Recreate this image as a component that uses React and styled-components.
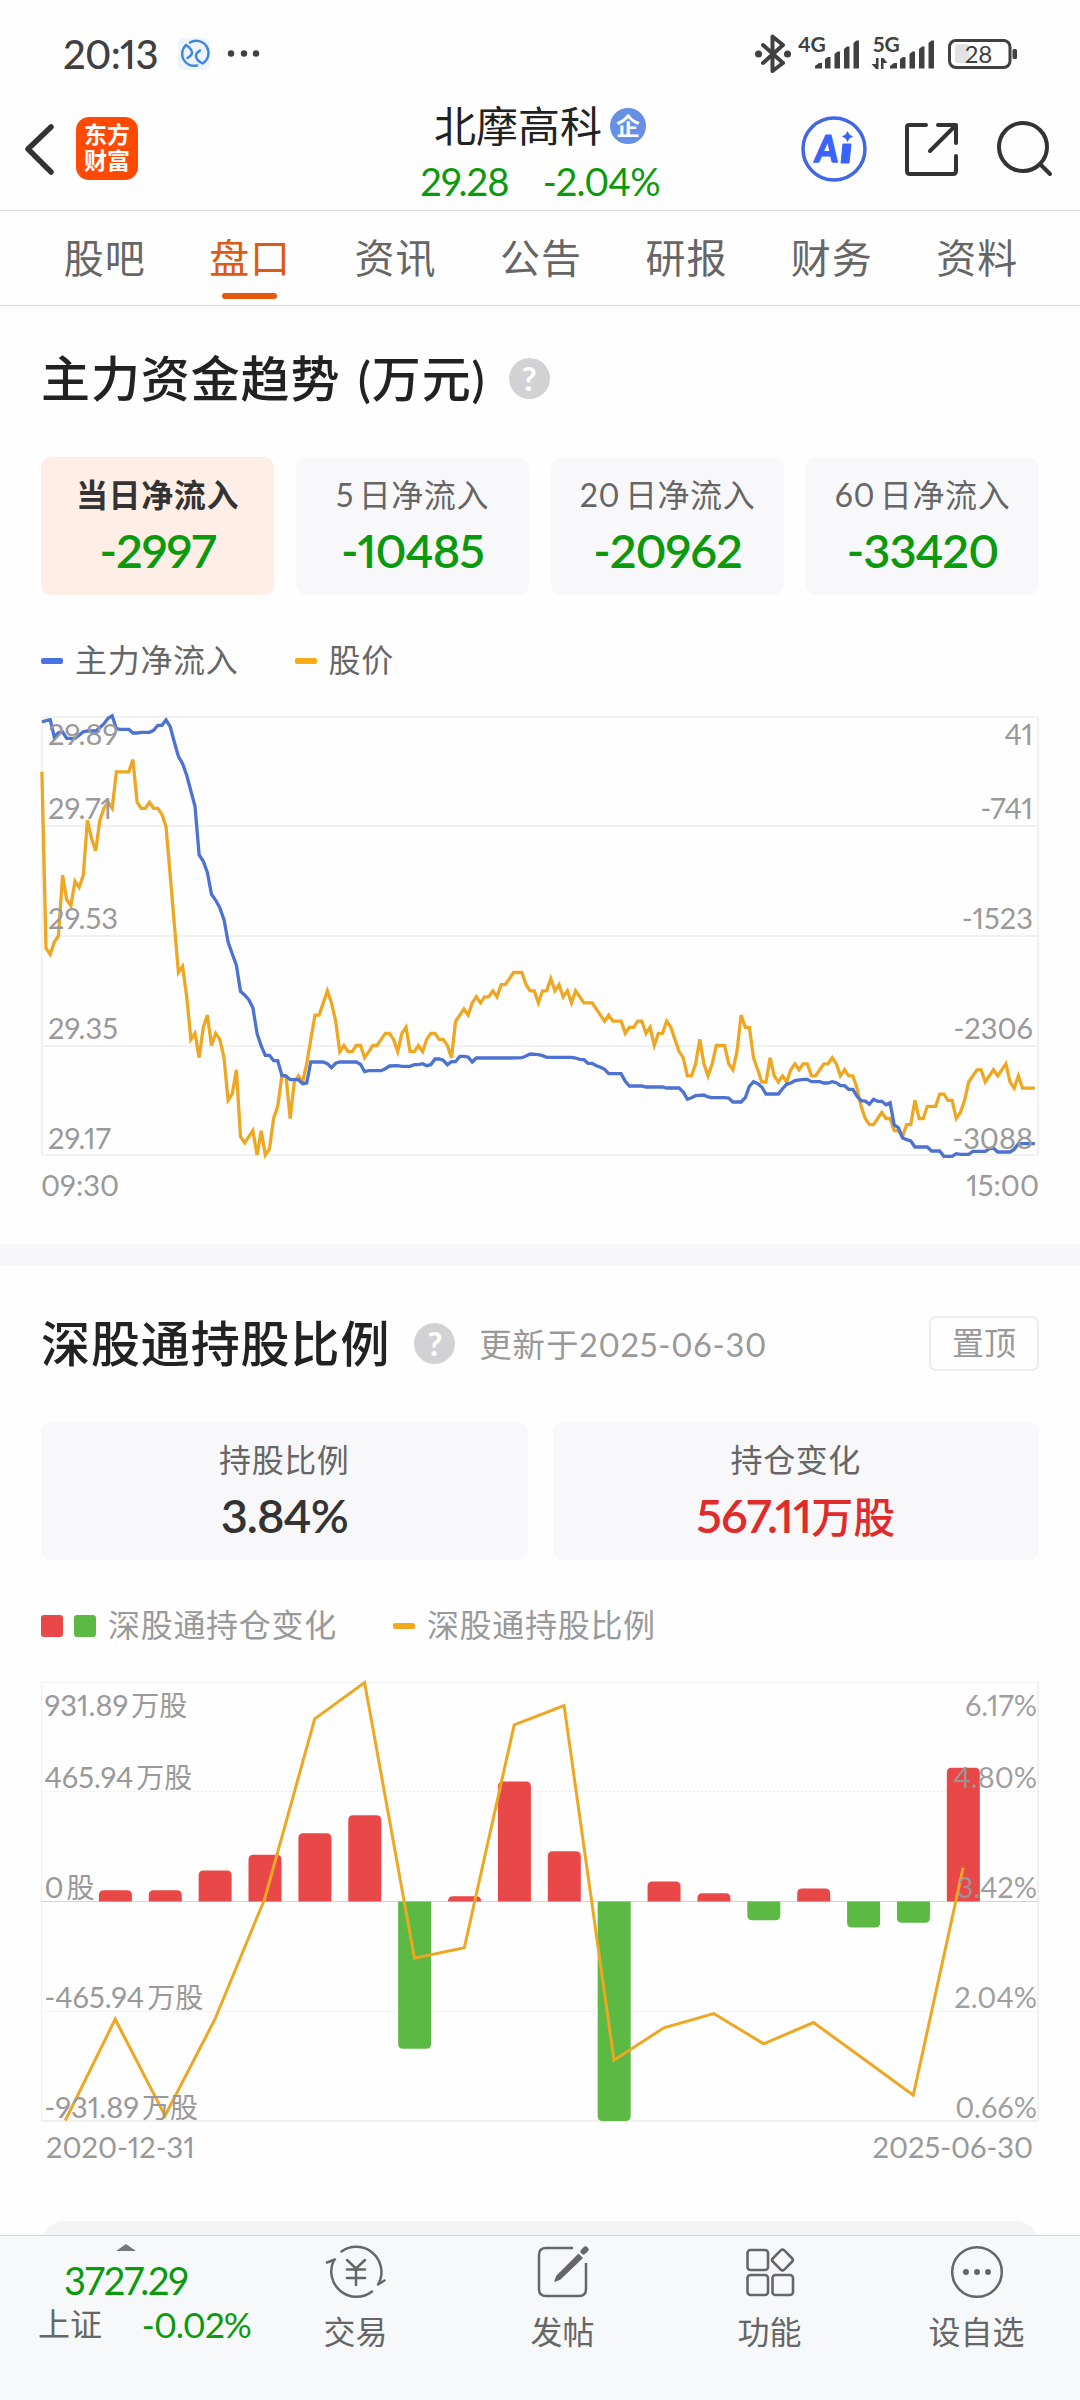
import React from "react"
import styled, { createGlobalStyle } from "styled-components"

const GREEN = "#0b990d"
const GREY = "#999999"
const ORANGE = "#eea722"

const GlobalStyle = createGlobalStyle`
  * {
    box-sizing: border-box;
  }

  body {
    margin: 0;
    background: #fefefe;
    font-family: Lato, "Noto Sans CJK SC", sans-serif;
    font-variant-numeric: proportional-nums;
    color: #222;
  }

  svg {
    display: block;
    overflow: visible;
    flex: none;
  }
`

const Screen = styled.div`
  width: 1080px;
  height: 2400px;
  overflow: hidden;
  display: flex;
  flex-direction: column;
`

const StatusBar = styled.div`
  height: 105px;
  padding: 2px 62px 0 63px;
  display: flex;
  align-items: center;
  color: #404040;
`

const Clock = styled.div`
  width: 115px;
  font-size: 40px;
  font-weight: 500;
  letter-spacing: -0.7px;
  line-height: 50px;
  white-space: nowrap;
`

const StatusRight = styled.div`
  margin-left: auto;
  display: flex;
  align-items: center;
`

const Header = styled.header`
  height: 106px;
  padding: 0 28px 0 24px;
  display: grid;
  grid-template-columns: 1fr auto 1fr;
  border-bottom: 1px solid #d6d6d6;
`

const HeaderLeft = styled.div`
  display: flex;
  align-items: center;
  gap: 22px;
  padding-bottom: 18px;
`

const HeaderRight = styled(HeaderLeft)`
  justify-content: flex-end;
  gap: 38px;
`

const AppLogo = styled.div`
  width: 62px;
  height: 63px;
  border-radius: 13px;
  background: #ff4a05;
  color: #fff;
  font-size: 23px;
  font-weight: 700;
  line-height: 26px;
  padding-top: 4px;
  text-align: center;
`

const StockTitle = styled.div`
  display: flex;
  flex-direction: column;
  align-items: center;
  padding-left: 4px;
`

const StockName = styled.div`
  height: 42px;
  display: flex;
  align-items: center;
  gap: 8px;
  font-size: 42px;
  line-height: 42px;
`

const CompanyBadge = styled.span`
  width: 36px;
  height: 36px;
  border-radius: 50%;
  background: #6590e6;
  color: #fff;
  font-size: 24px;
  font-weight: 700;
  line-height: 35px;
  text-align: center;
`

const StockPrice = styled.div`
  margin-top: 12px;
  display: flex;
  gap: 34px;
  font-size: 38px;
  letter-spacing: -0.9px;
  line-height: 44px;
  color: ${GREEN};
`

const Tabs = styled.nav`
  height: 95px;
  padding: 0 30px 0 32px;
  display: flex;
  border-bottom: 1px solid #d6d6d6;
`

const Tab = styled.div`
  flex: 1;
  position: relative;
  text-align: center;
  font-size: 40px;
  letter-spacing: 1px;
  line-height: 94px;
  color: ${p => (p.$active ? "#dd5a14" : "#666")};

  &::after {
    content: "";
    display: ${p => (p.$active ? "block" : "none")};
    position: absolute;
    left: 45px;
    bottom: 6px;
    width: 55px;
    height: 6px;
    border-radius: 3px;
    background: #e4580c;
  }
`

const Section = styled.section`
  padding: 0 41px;
`

const SectionHead = styled.div`
  display: flex;
  align-items: center;
  height: 56px;
  margin-top: ${p => p.$top}px;
`

const SectionTitle = styled.h2`
  margin: 0;
  font-size: 49px;
  font-weight: 500;
  letter-spacing: 0.9px;
  word-spacing: 4px;
  line-height: 56px;
  white-space: nowrap;
`

const Help = styled.span`
  width: 41px;
  height: 41px;
  margin-left: ${p => p.$left}px;
  border-radius: 50%;
  background: #d2d2d4;
  color: #fff;
  font-size: 33px;
  font-weight: 700;
  line-height: 40px;
  text-align: center;
`

const Updated = styled.span`
  margin-left: 24px;
  padding-bottom: 2px;
  font-size: 32.5px;
  letter-spacing: 0.8px;
  color: ${GREY};
`

const PinButton = styled.button`
  margin-left: auto;
  width: 110px;
  height: 55px;
  padding: 0;
  border: 2px solid #ececee;
  border-radius: 7px;
  background: none;
  font: inherit;
  font-size: 32px;
  line-height: 50px;
  color: ${GREY};
`

const Cards = styled.div`
  display: flex;
  gap: ${p => p.$gap}px;
  margin-top: 51px;
`

const Card = styled.div`
  flex: 1;
  height: 138px;
  padding-top: 16px;
  border-radius: 10px;
  text-align: center;
  white-space: nowrap;
  background: ${p => (p.$active ? "#feeee5" : "#f8f8fa")};
`

const CardLabel = styled.div`
  font-size: 32px;
  letter-spacing: 0.6px;
  word-spacing: -4px;
  line-height: 44px;
  font-weight: ${p => (p.$active ? 700 : 400)};
  color: ${p => (p.$active ? "#333" : "#666")};
`

const CardValue = styled.div`
  margin-top: 8px;
  font-size: 47px;
  font-weight: 600;
  line-height: 50px;
  letter-spacing: -1px;
  color: ${p => p.$color};

  small {
    font-size: 42px;
    font-weight: 500;
    letter-spacing: 0;
  }
`

const Legend = styled.div`
  display: flex;
  align-items: center;
  height: 40px;
  margin-top: 46px;
  font-size: 32px;
  letter-spacing: 0.7px;
  line-height: 36px;
  color: ${p => p.$color};
`

const LegendItem = styled.div`
  display: flex;
  align-items: center;
  margin-right: 56px;
`

const LegendText = styled.span`
  padding-bottom: 3px;
`

const Dash = styled.i`
  width: 22px;
  height: 6px;
  margin-right: 12px;
  border-radius: 2px;
  background: ${p => p.$color};
`

const Square = styled.i`
  width: 22px;
  height: 22px;
  margin-right: ${p => p.$gap}px;
  border-radius: 3px;
  background: ${p => p.$color};
`

const ChartBox = styled.div`
  height: ${p => p.$height}px;
  margin-top: ${p => p.$top}px;

  text {
    font-size: 29px;
    fill: ${GREY};
  }

  .cjk {
    font-size: 28px;
  }
`

const Divider = styled.div`
  height: 22px;
  flex: none;
  background: #f7f7fa;
`

const NextPanel = styled.div`
  flex: none;
  height: 14px;
  margin: auto 41px 0;
  overflow: hidden;

  &::before {
    content: "";
    display: block;
    height: 60px;
    border-radius: 24px;
    background: #f4f4f4;
  }
`

const BottomBar = styled.footer`
  flex: none;
  height: 165px;
  display: flex;
  border-top: 1px solid #d3d6d8;
  background: #f6f8fa;
`

const IndexQuote = styled.div`
  width: 252px;
  padding-top: 8px;
  display: flex;
  flex-direction: column;
  align-items: center;
`

const IndexValue = styled.div`
  margin-top: 8px;
  font-size: 38px;
  letter-spacing: -1.2px;
  line-height: 42px;
  color: ${GREEN};
`

const IndexRow = styled.div`
  width: 100%;
  padding: 0 1px 0 38px;
  display: flex;
  justify-content: space-between;
  font-size: 32px;
  line-height: 46px;
  color: #666;

  span {
    font-size: 35px;
    letter-spacing: -0.9px;
    color: ${GREEN};
  }
`

const Action = styled.div`
  flex: 1;
  padding-top: 6px;
  display: flex;
  flex-direction: column;
  align-items: center;
  font-size: 32px;
  line-height: 46px;
  color: #666;

  svg {
    margin-bottom: 7px;
  }
`

// price: [minute, cents below 29.89]; runs of equal values keep both ends
const PRICE = [
  [0, 9], [1, 38], [2, 39], [3, 37], [4, 36], [5, 26], [6, 30], [7, 31], [8, 27], [9, 28],
  [10, 26], [11, 17], [12, 20], [13, 22], [14, 17], [15, 15], [16, 14], [17, 15], [18, 9], [21, 9],
  [22, 7], [23, 14], [24, 15], [25, 15], [26, 14], [27, 15], [28, 15], [29, 16], [30, 18], [31, 26],
  [32, 34], [33, 42], [34, 41], [35, 46], [36, 53], [37, 52], [38, 56], [39, 51], [40, 49], [41, 54],
  [42, 52], [43, 53], [44, 56], [45, 63], [46, 62], [47, 58], [48, 69], [49, 70], [50, 69], [51, 68],
  [52, 72], [53, 68], [54, 72], [55, 71], [56, 66], [57, 64], [58, 59], [59, 59], [60, 66], [61, 60],
  [62, 59], [63, 60], [64, 57], [65, 53], [66, 49], [67, 49], [68, 47], [69, 45], [70, 47], [71, 50],
  [72, 55], [73, 54], [74, 55], [75, 55], [76, 54], [77, 54], [78, 56], [79, 55], [80, 54], [81, 54],
  [82, 53], [83, 52], [84, 52], [85, 53], [86, 55], [87, 52], [88, 51], [89, 55], [90, 55], [91, 54],
  [92, 55], [93, 53], [94, 52], [95, 52], [96, 53], [97, 53], [98, 54], [99, 56], [100, 50], [101, 49],
  [102, 48], [103, 49], [104, 47], [105, 46], [106, 47], [107, 46], [108, 46], [109, 45], [110, 46],
  [111, 44], [112, 44], [113, 43], [114, 42], [116, 42], [117, 44], [118, 45], [119, 45], [120, 47],
  [121, 45], [122, 45], [123, 43], [124, 45], [125, 44], [126, 46], [127, 45], [128, 47], [129, 45],
  [130, 46], [131, 47], [133, 47], [134, 48], [135, 49], [136, 50], [137, 49], [138, 50], [140, 50],
  [141, 52], [142, 51], [143, 51], [144, 50], [145, 50], [146, 52], [147, 51], [148, 54], [149, 52],
  [150, 52], [151, 50], [152, 51], [153, 53], [154, 55], [155, 56], [156, 59], [157, 59], [158, 57],
  [159, 53], [160, 57], [161, 59], [162, 57], [163, 54], [165, 54], [166, 57], [167, 58], [168, 55],
  [169, 49], [170, 51], [171, 51], [172, 56], [173, 58], [174, 60], [175, 60], [176, 56], [177, 59],
  [178, 60], [179, 59], [180, 60], [181, 58], [182, 57], [183, 58], [184, 57], [185, 57], [186, 59],
  [187, 59], [188, 58], [189, 57], [190, 57], [191, 56], [192, 57], [193, 59], [194, 58], [195, 59],
  [196, 59], [197, 61], [198, 64], [199, 66], [200, 67], [201, 67], [202, 66], [203, 65], [204, 66],
  [205, 66], [206, 68], [207, 68], [208, 69], [209, 67], [210, 67], [211, 63], [212, 66], [213, 66],
  [214, 64], [216, 64], [217, 62], [218, 62], [219, 63], [220, 63], [221, 66], [222, 65], [223, 63],
  [224, 60], [225, 59], [226, 58], [227, 58], [228, 60], [229, 59], [230, 58], [231, 59], [232, 58],
  [233, 57], [234, 60], [235, 61], [236, 59], [237, 61], [240, 61],
]

// net inflow: [minute, drop from the top of the scale], full scale is 1314
const FLOW = [
  [0, 15], [1, 11], [2, 8], [3, 60], [4, 47], [5, 45], [6, 64], [8, 64], [9, 55], [10, 44],
  [11, 42], [13, 42], [14, 32], [15, 20], [16, 4], [17, -4], [18, 35], [19, 37], [21, 37], [22, 48],
  [23, 48], [24, 46], [26, 46], [27, 40], [28, 25], [29, 25], [30, 9], [31, 29], [32, 75], [33, 118],
  [34, 140], [35, 175], [36, 222], [37, 268], [38, 413], [39, 433], [40, 467], [41, 532], [42, 550],
  [43, 572], [44, 608], [45, 675], [46, 710], [47, 745], [48, 823], [49, 834], [50, 848], [51, 872],
  [52, 950], [53, 987], [54, 1015], [55, 1015], [56, 1031], [57, 1031], [58, 1075], [59, 1077],
  [60, 1088], [62, 1088], [63, 1100], [64, 1098], [65, 1035], [68, 1035], [69, 1040], [70, 1052],
  [71, 1039], [72, 1035], [76, 1035], [77, 1042], [78, 1064], [79, 1061], [82, 1061], [83, 1055],
  [84, 1047], [86, 1046], [87, 1048], [89, 1048], [90, 1043], [91, 1043], [92, 1040], [93, 1046],
  [94, 1043], [95, 1026], [96, 1026], [97, 1030], [98, 1043], [99, 1034], [100, 1034], [101, 1018],
  [102, 1018], [103, 1020], [104, 1035], [105, 1023], [113, 1023], [116, 1022], [117, 1017],
  [118, 1011], [120, 1013], [121, 1016], [122, 1021], [128, 1021], [129, 1023], [130, 1027],
  [131, 1028], [132, 1039], [133, 1039], [134, 1046], [135, 1051], [136, 1057], [137, 1070],
  [140, 1070], [141, 1093], [142, 1107], [145, 1107], [146, 1110], [150, 1110], [151, 1113],
  [154, 1113], [155, 1125], [156, 1147], [157, 1142], [158, 1136], [160, 1134], [161, 1140],
  [162, 1142], [165, 1142], [166, 1143], [167, 1155], [169, 1155], [170, 1142], [171, 1108],
  [172, 1094], [173, 1100], [174, 1110], [175, 1131], [178, 1131], [179, 1115], [180, 1102],
  [181, 1098], [182, 1091], [184, 1087], [185, 1087], [186, 1094], [188, 1094], [189, 1098],
  [190, 1098], [191, 1094], [192, 1097], [193, 1106], [194, 1106], [195, 1117], [196, 1117],
  [197, 1138], [198, 1151], [199, 1152], [200, 1162], [201, 1147], [202, 1153], [203, 1153],
  [204, 1163], [205, 1157], [206, 1224], [207, 1232], [208, 1262], [209, 1268], [210, 1272],
  [211, 1290], [214, 1290], [215, 1302], [217, 1302], [218, 1318], [220, 1318], [221, 1310],
  [222, 1312], [224, 1312], [225, 1303], [228, 1303], [229, 1295], [230, 1293], [231, 1305],
  [234, 1305], [235, 1297], [236, 1280], [240, 1280],
]

const HOLDING_CHANGE = [
  0, 11.3, 11.3, 31, 46.7, 68.3, 86.3, -147.3, 5.3, 120, 50.3, -219.5, 20, 8.3, -18.7, 13, -26,
  -21.3, 133.7,
]

const HOLDING_RATIO = [
  438, 336.7, 433.3, 336.7, 216, 36.3, 0, 275.7, 265.3, 42.3, 23, 377.7, 345.3, 331, 361.3, 340,
  376.3, 412.7, 185.3,
]

// text baselines of the five scale labels
const ROWS = [29, 102.5, 212.5, 322.5, 432.5]

function toPoints(series, scale) {
  return series.map(([m, v]) => `${(0.9 + m * 4.1375).toFixed(1)},${(1 + v * scale).toFixed(1)}`).join(" ")
}

function TrendChart() {
  const prices = ["29.89", "29.71", "29.53", "29.35", "29.17"]
  const flows = ["41", "-741", "-1523", "-2306", "-3088"]
  return (
    <ChartBox $top={35} $height={528}>
      <svg width="998" height="490">
        <g stroke="#f1f1f2" strokeWidth="2" fill="none">
          <rect x="1" y="1" width="996" height="438" />
          <path d="M1 110H997M1 220H997M1 330H997" />
        </g>
        <polyline points={toPoints(PRICE, 438 / 72)} fill="none" stroke={ORANGE} strokeWidth="3.3" />
        <polyline points={toPoints(FLOW, 1 / 3)} fill="none" stroke="#4c72d2" strokeWidth="3.3" />
        {prices.map((t, i) => (
          <text key={t} x="7" y={ROWS[i]}>
            {t}
          </text>
        ))}
        {flows.map((t, i) => (
          <text key={t} x="992" y={ROWS[i]} textAnchor="end">
            {t}
          </text>
        ))}
        <text x="0" y="480">
          09:30
        </text>
        <text x="998" y="480" textAnchor="end">
          15:00
        </text>
      </svg>
    </ChartBox>
  )
}

function Bar({ slot, value }) {
  const x = 8 + slot * 49.88
  const h = Math.abs(value)
  const r = Math.min(5, h)
  const dir = value > 0 ? -1 : 1
  const end = 219.5 + dir * h
  return (
    <path
      d={`M${x} 219.5V${end - dir * r}Q${x} ${end} ${x + r} ${end}H${x + 33 - r}Q${x + 33} ${end} ${x + 33} ${
        end - dir * r
      }V219.5Z`}
      fill={value > 0 ? "#e84848" : "#5cb944"}
    />
  )
}

function HoldingChart() {
  const shares = ["931.89", "465.94", "0", "-465.94", "-931.89"]
  const ratios = ["6.17%", "4.80%", "3.42%", "2.04%", "0.66%"]
  const line = HOLDING_RATIO.map((v, i) => `${24.3 + i * 49.88},${v + 0.5}`).join(" ")
  return (
    <ChartBox $top={36} $height={500}>
      <svg width="998" height="490">
        <path d="M0.5 439V0.5H997" stroke="#f0f0f1" fill="none" />
        <path d="M0 439H997V0" stroke="#f0f0f1" strokeWidth="2" fill="none" />
        <path d="M0 109.5H997M0 329.5H997" stroke="#ededee" strokeDasharray="2 2" />
        <path d="M0 219.5H997" stroke="#d4d4d6" />
        {HOLDING_CHANGE.map((v, i) => v !== 0 && <Bar key={i} slot={i} value={v} />)}
        <polyline points={line} fill="none" stroke={ORANGE} strokeWidth="3" />
        {shares.map((t, i) => (
          <text key={t} x="3.500" y={i === 0 ? 34 : ROWS[i] + 3.5}>
            {t}
            <tspan className="cjk" dx="3">
              {t === "0" ? "股" : "万股"}
            </tspan>
          </text>
        ))}
        {ratios.map((t, i) => (
          <text key={t} x="996" y={i === 0 ? 34 : ROWS[i] + 3.5} textAnchor="end" fillOpacity="0.95">
            {t}
          </text>
        ))}
        <text x="5" y="476">
          2020-12-31
        </text>
        <text x="992" y="476" textAnchor="end">
          2025-06-30
        </text>
      </svg>
    </ChartBox>
  )
}

function Signal() {
  return (
    <g fill="#404040">
      <path d="M0 29.500V27L4 24H7V29.500Z" />
      <path d="M10 29.500V20L13 18H15.500V29.500Z" />
      <path d="M19.500 29.500V15L22.500 12.500H25V29.500Z" />
      <path d="M29 29.500V10L32 7.500H34.500V29.500Z" />
      <path d="M38.500 29.500V4L41.500 1.500H44V29.500Z" />
    </g>
  )
}

function StatusIcons() {
  return (
    <svg width="263" height="40" viewBox="755 33 263 40">
      <path d="M763 44L783 62L772.500 70V35.500L783 44L763 62" fill="none" stroke="#404040" strokeWidth="4" strokeLinejoin="round" strokeLinecap="round" />
      <circle cx="758.500" cy="53" r="3.500" fill="#404040" />
      <circle cx="787.500" cy="53" r="3.500" fill="#404040" />
      <text x="798" y="51" fontSize="21" fontWeight="700" fill="#404040">4G</text>
      <g transform="translate(815 38)">
        <Signal />
      </g>
      <text x="873" y="51" fontSize="21" fontWeight="700" fill="#404040">5G</text>
      <path d="M878.500 57V68H876L871.500 63H876V57ZM881 68V57H883.500L887.500 62H883.500V68Z" fill="#404040" />
      <g transform="translate(890 38)">
        <Signal />
      </g>
      <rect x="955" y="43" width="14" height="19" rx="3" fill="#e2e2e2" />
      <rect x="949.500" y="39.500" width="60.500" height="27" rx="6.500" fill="none" stroke="#404040" strokeWidth="3" />
      <rect x="1012.500" y="48" width="4.500" height="10" rx="1.500" fill="#404040" />
      <text x="978.500" y="62" fontSize="24" textAnchor="middle" fill="#404040">28</text>
    </svg>
  )
}

const CARDS = [
  ["当日净流入", "-2997"],
  ["5 日净流入", "-10485"],
  ["20 日净流入", "-20962"],
  ["60 日净流入", "-33420"],
]

const TABS = ["股吧", "盘口", "资讯", "公告", "研报", "财务", "资料"]

function App() {
  return (
    <Screen>
      <GlobalStyle />
      <StatusBar>
        <Clock>20:13</Clock>
        <svg width="80" height="32">
          <rect width="32" height="32" rx="6" fill="#edf4fc" />
          <g fill="none" stroke="#3f86dc" strokeWidth="2.500" strokeLinecap="round" strokeLinejoin="round">
            <path d="M12 4.500A12 12 0 0 1 24.500 25.500Q18 22 18 18Q18 15 22 12.500" />
            <path d="M19 27.500A12 12 0 0 1 8 7Q14 11 14 14.500Q14 17.500 9.500 20" />
          </g>
          <g fill="#404040">
            <circle cx="53" cy="15.500" r="3.200" />
            <circle cx="66" cy="15.500" r="3.200" />
            <circle cx="78" cy="15.500" r="3.200" />
          </g>
        </svg>
        <StatusRight>
          <StatusIcons />
        </StatusRight>
      </StatusBar>

      <Header>
        <HeaderLeft>
          <svg width="30" height="50" fill="none" stroke="#333" strokeWidth="5.500" strokeLinecap="round" strokeLinejoin="round">
            <path d="M27 3L4 25L27 48" />
          </svg>
          <AppLogo>
            东方
            <br />
            财富
          </AppLogo>
        </HeaderLeft>
        <StockTitle>
          <StockName>
            北摩高科
            <CompanyBadge>企</CompanyBadge>
          </StockName>
          <StockPrice>
            <span>29.28</span>
            <span>-2.04%</span>
          </StockPrice>
        </StockTitle>
        <HeaderRight>
          <svg width="66" height="66">
            <circle cx="33" cy="33" r="31" fill="none" stroke="#4167e6" strokeWidth="3.500" />
            <text x="0" y="0" fontSize="37" fontWeight="900" fill="#3964fb" stroke="#3964fb" strokeWidth="1.500" transform="translate(13 45.500) skewX(-6) scale(0.88 1)">A</text>
            <path d="M42 28H50L48 47H40Z" fill="#3964fb" stroke="#3964fb" strokeLinejoin="round" />
            <path d="M46.500 15L48.500 18.500L52 20.500L48.500 22.500L46.500 26L44.500 22.500L41 20.500L44.500 18.500Z" fill="#3964fb" />
          </svg>
          <svg width="54" height="54" fill="none" stroke="#333" strokeWidth="4" strokeLinecap="round" strokeLinejoin="round">
            <path d="M21 3H4Q2 3 2 5V49Q2 52 5 52H48Q51 52 51 49V34" />
            <path d="M33 3H51V21M51 3L25 29" />
          </svg>
          <svg width="55" height="54" fill="none" stroke="#333" strokeWidth="4" strokeLinecap="round">
            <circle cx="26" cy="25" r="24" />
            <path d="M43 42L53 52" />
          </svg>
        </HeaderRight>
      </Header>

      <Tabs>
        {TABS.map(t => (
          <Tab key={t} $active={t === "盘口"}>
            {t}
          </Tab>
        ))}
      </Tabs>

      <Section>
        <SectionHead $top={44}>
          <SectionTitle>主力资金趋势 (万元)</SectionTitle>
          <Help $left={23}>?</Help>
        </SectionHead>
        <Cards $gap={22}>
          {CARDS.map(([label, value], i) => (
            <Card key={label} $active={i === 0}>
              <CardLabel $active={i === 0}>{label}</CardLabel>
              <CardValue $color={GREEN}>{value}</CardValue>
            </Card>
          ))}
        </Cards>
        <Legend $color="#666">
          <LegendItem>
            <Dash $color="#4a72e8" />
            <LegendText>主力净流入</LegendText>
          </LegendItem>
          <LegendItem>
            <Dash $color="#f8ab14" />
            <LegendText>股价</LegendText>
          </LegendItem>
        </Legend>
        <TrendChart />
      </Section>

      <Divider />

      <Section>
        <SectionHead $top={49}>
          <SectionTitle>深股通持股比例</SectionTitle>
          <Help $left={24}>?</Help>
          <Updated>更新于2025-06-30</Updated>
          <PinButton>置顶</PinButton>
        </SectionHead>
        <Cards $gap={25}>
          <Card>
            <CardLabel>持股比例</CardLabel>
            <CardValue $color="#333">3.84%</CardValue>
          </Card>
          <Card>
            <CardLabel>持仓变化</CardLabel>
            <CardValue $color="#e02b2b">
              567.11<small>万股</small>
            </CardValue>
          </Card>
        </Cards>
        <Legend $color={GREY}>
          <LegendItem>
            <Square $color="#e84848" $gap={11} />
            <Square $color="#5cb944" $gap={12} />
            <LegendText>深股通持仓变化</LegendText>
          </LegendItem>
          <LegendItem>
            <Dash $color="#f2a91c" />
            <LegendText>深股通持股比例</LegendText>
          </LegendItem>
        </Legend>
        <HoldingChart />
      </Section>

      <NextPanel />
      <BottomBar>
        <IndexQuote>
          <svg width="20" height="7">
            <path d="M0 7L10 0L20 7Z" fill="#777" />
          </svg>
          <IndexValue>3727.29</IndexValue>
          <IndexRow>
            上证<span>-0.02%</span>
          </IndexRow>
        </IndexQuote>
        <Action>
          <svg width="60" height="60" viewBox="-30 -30 60 60" fill="none" stroke="#666" strokeWidth="2.500" strokeLinecap="round" strokeLinejoin="round">
            <path d="M-14.500 -20.500A25.300 25.300 0 0 1 23 11L22 12.500L28.500 8.500" />
            <path d="M16 19.500A25.300 25.300 0 0 1 -22 -12L-21 -12.500L-29 -9.500" />
            <path d="M-9 -12L0 -3.500L9 -12M-9 -2.500H9M-9 6H9M0 -2.500V13" />
          </svg>
          交易
        </Action>
        <Action>
          <svg width="60" height="60" viewBox="-30 -30 60 60">
            <path d="M10 -24H-17Q-24 -24 -24 -17V17Q-24 24 -17 24H16Q23 24 23 17V-9" fill="none" stroke="#666" strokeWidth="2.500" />
            <path d="M15.500 -17.500L19 -14L-3 7L-8 9L-6 4Z" fill="#666" stroke="#666" strokeWidth="1.500" strokeLinejoin="round" />
            <path d="M20.500 -20.500L22.500 -22.500" stroke="#666" strokeWidth="6" strokeLinecap="round" />
          </svg>
          发帖
        </Action>
        <Action>
          <svg width="60" height="60" viewBox="-30 -30 60 60" fill="none" stroke="#666" strokeWidth="2.600">
            <rect x="-22.500" y="-22" width="20.500" height="20" rx="3" />
            <rect x="-22.500" y="3" width="20.500" height="20" rx="3" />
            <rect x="2.500" y="3" width="20.500" height="20" rx="3" />
            <rect x="-8" y="-8" width="16" height="16" rx="2.500" transform="translate(12.500 -12) rotate(45)" />
          </svg>
          功能
        </Action>
        <Action>
          <svg width="60" height="60" viewBox="-30 -30 60 60">
            <circle r="24.800" fill="none" stroke="#666" strokeWidth="2.500" />
            <circle cx="-11" r="3" fill="#666" />
            <circle r="3" fill="#666" />
            <circle cx="11" r="3" fill="#666" />
          </svg>
          设自选
        </Action>
      </BottomBar>
    </Screen>
  )
}

export default App
